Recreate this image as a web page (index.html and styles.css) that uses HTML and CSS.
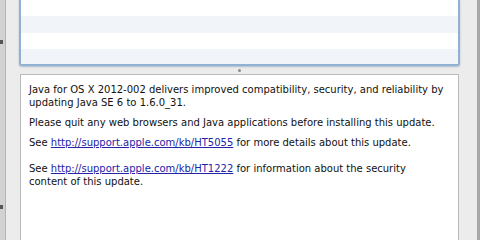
FILE: index.html
```html
<!DOCTYPE html>
<html lang="en">
<head>
    <meta charset="UTF-8">
    <title>Software Update</title>
    <link rel="stylesheet" href="styles.css">
</head>
<body>
    <div class="window">
        <div class="edge-left"><span class="mark"></span><span class="mark low"></span></div>
        <div class="content">
            <div class="update-list">
                <div class="row"></div>
                <div class="row alt"></div>
                <div class="row"></div>
                <div class="row alt"></div>
            </div>
            <div class="splitter"><span class="grip"></span></div>
            <div class="notes">
                <p>Java for OS X 2012-002 delivers improved compatibility, security, and reliability by updating Java SE 6 to 1.6.0_31.</p>
                <p>Please quit any web browsers and Java applications before installing this update.</p>
                <p>See <a href="#">http://support.apple.com/kb/HT5055</a> for more details about this update.</p>
                <p class="security">See <a href="#">http://support.apple.com/kb/HT1222</a> for information about the security content of this update.</p>
            </div>
        </div>
        <div class="edge-right"></div>
    </div>
</body>
</html>
```

FILE: styles.css
```css
body, html {
    height: 100%;
    margin: 0;
    background-color: #ececec;
    font-family: "DejaVu Sans", sans-serif;
    overflow: hidden;
}

.window {
    display: flex;
    height: 240px;
}

.edge-left {
    width: 5px;
    background-color: #d2d2d2;
    border-right: 1px solid #b4b4b4;
    position: relative;
}

.edge-left .mark {
    position: absolute;
    left: 0;
    top: 40px;
    width: 3px;
    height: 4px;
    background-color: #555;
}

.edge-left .mark.low {
    top: 205px;
}

.content {
    flex: 1;
    display: flex;
    flex-direction: column;
    padding: 0 17px 0 13px;
}

.update-list {
    height: 64px;
    border: 2px solid #8fb2d4;
    border-top: none;
    border-radius: 0 0 3px 3px;
    box-shadow: 0 1px 2px rgba(60, 100, 150, 0.35);
    background-color: #fff;
    overflow: hidden;
}

.row {
    height: 16px;
    background-color: #fff;
}

.row.alt {
    height: 17px;
    background-color: #f1f5fa;
}

.splitter {
    height: 8px;
    display: flex;
    justify-content: center;
    align-items: center;
}

.grip {
    width: 3px;
    height: 3px;
    border-radius: 50%;
    background-color: #8a8a8a;
}

.notes {
    flex: 1;
    margin: 0 1px;
    background-color: #fff;
    border: 1px solid #b9b9b9;
    border-bottom: none;
    padding: 8px 13px 0 8px;
    font-size: 10px;
    line-height: 13px;
    color: #111;
}

.notes p {
    margin: 0 0 7px 0;
}

.notes p.security {
    margin-top: 13px;
}

.notes a {
    color: #2323a8;
    text-decoration: underline;
}

.edge-right {
    width: 3px;
    background-color: #a8a8a8;
}
```
